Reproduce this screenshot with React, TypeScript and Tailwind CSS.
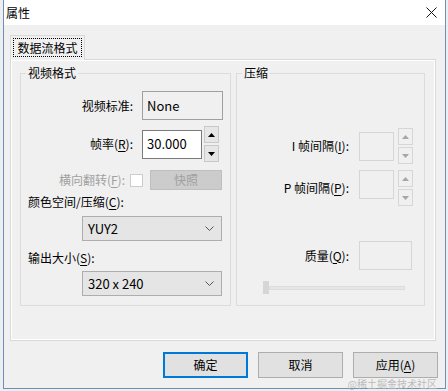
import type { ReactNode } from 'react';

const font = { fontFamily: '"Noto Sans CJK SC", "Noto Sans", sans-serif' };

const Key = ({ k }: { k: string }) => <span className="underline underline-offset-2">{k}</span>;

const Arrow = ({ up, disabled }: { up?: boolean; disabled?: boolean }) => (
  <svg width="7" height="4" viewBox="0 0 7 4">
    <path d={up ? 'M0 4 L3.5 0 L7 4 Z' : 'M0 0 L7 0 L3.5 4 Z'} fill={disabled ? '#a6a6a6' : '#000'} />
  </svg>
);

const Spinner = ({ disabled }: { disabled?: boolean }) => (
  <div className="flex w-[15px] flex-col gap-[2px]">
    {[true, false].map((up) => (
      <div
        key={String(up)}
        className={
          'flex h-[17px] items-center justify-center border ' +
          (disabled ? 'border-[#d6d6d6] bg-[#f0f0f0]' : 'border-[#c9c9c9] bg-[#e6e6e6]')
        }
      >
        <Arrow up={up} disabled={disabled} />
      </div>
    ))}
  </div>
);

const Select = ({ value }: { value: string }) => (
  <div className="ml-[61px] flex h-[25px] w-[140px] items-center justify-between border border-[#adadad] bg-[#e5e5e5] pr-[7px] pl-[5px] text-[13px]">
    <span>{value}</span>
    <svg width="9" height="5" viewBox="0 0 9 5">
      <path d="M0.5 0.5 L4.5 4.5 L8.5 0.5" fill="none" stroke="#555" strokeWidth="1" />
    </svg>
  </div>
);

const Group = ({
  title,
  className,
  children,
}: {
  title: string;
  className: string;
  children: ReactNode;
}) => (
  <fieldset className={'border border-[#dcdcdc] ' + className}>
    <legend className="ml-[5px] px-[2px] leading-[16px]">{title}</legend>
    {children}
  </fieldset>
);

const Button = ({ children, focused }: { children: ReactNode; focused?: boolean }) => (
  <div
    className={
      'flex h-[26px] w-[85px] items-center justify-center bg-[#e1e1e1] ' +
      (focused ? 'border-2 border-[#0078d7]' : 'border border-[#adadad]')
    }
  >
    {children}
  </div>
);

export default function App() {
  return (
    <div
      className="relative h-[391px] w-[448px] overflow-hidden bg-[#eceef1] text-[12px] leading-[16px] text-black"
      style={font}
    >
      <div className="ml-[3px] flex h-[389px] w-[443px] flex-col border-x border-b border-[#6f8fb6] bg-[#f0f0f0]">
        {/* title bar */}
        <div className="flex h-[25px] items-center justify-between bg-white pr-[8px] pl-[2px]">
          <span className="text-[12px]">属性</span>
          <svg width="11" height="11" viewBox="0 0 11 11">
            <path d="M0.5 0.5 L10.5 10.5 M10.5 0.5 L0.5 10.5" stroke="#111" strokeWidth="1" />
          </svg>
        </div>

        {/* tab */}
        <div className="mt-[10px] ml-[6px] flex">
          <div className="relative z-10 -mb-px h-[25px] w-[75px] border-x border-t border-[#d9d9d9] bg-[#f0f0f0] p-[2px]">
            <div className="flex h-[19px] items-center justify-center border border-dotted border-black">
              数据流格式
            </div>
          </div>
        </div>

        {/* panel */}
        <div className="ml-[6px] flex h-[282px] w-[426px] border border-[#d9d9d9] shadow-[inset_1px_1px_0_#fff,inset_-1px_-1px_0_#fff]">
          <Group title="视频格式" className="mt-[5px] ml-[9px] h-[241px] w-[211px]">
            <div className="mt-[10px] flex items-center">
              <span className="w-[121px] pr-[9px] text-right">视频标准:</span>
              <div className="flex h-[29px] w-[81px] items-center border border-[#a0a0a0] pt-px pl-[4px] text-[13px]">
                None
              </div>
            </div>
            <div className="mt-[6px] flex h-[36px] items-center">
              <span className="w-[121px] pr-[9px] text-right">
                帧率(<Key k="R" />):
              </span>
              <div className="flex h-[29px] w-[60px] items-center border border-[#7a7a7a] bg-white pl-[4px] text-[13px]">
                30.000
              </div>
              <div className="ml-[2px]">
                <Spinner />
              </div>
            </div>
            <div className="mt-[8px] flex h-[20px] items-center text-[#a0a0a0]">
              <span className="w-[104px] text-right">
                横向翻转(<Key k="F" />):
              </span>
              <div className="ml-[5px] h-[13px] w-[13px] border border-[#cccccc] bg-white" />
              <div className="ml-[7px] flex h-[20px] w-[72px] items-center justify-center border border-[#bfbfbf] bg-[#cccccc] text-[#a0a0a0]">
                快照
              </div>
            </div>
            <div className="mt-[4px] ml-[7px]">
              颜色空间/压缩(<Key k="C" />):
            </div>
            <div className="mt-[6px]">
              <Select value="YUY2" />
            </div>
            <div className="mt-[9px] ml-[7px]">
              输出大小(<Key k="S" />):
            </div>
            <div className="mt-[5px]">
              <Select value="320 x 240" />
            </div>
          </Group>

          <Group title="压缩" className="mt-[5px] ml-[5px] h-[241px] w-[189px]">
            <div className="mt-[47px] flex h-[36px] items-center">
              <span className="w-[122px] pr-[10px] text-right">
                I 帧间隔(<Key k="I" />):
              </span>
              <div className="h-[29px] w-[35px] border border-[#d6d6d6]" />
              <div className="ml-[4px]">
                <Spinner disabled />
              </div>
            </div>
            <div className="mt-[6px] flex h-[36px] items-center">
              <span className="w-[122px] pr-[10px] text-right">
                P 帧间隔(<Key k="P" />):
              </span>
              <div className="h-[29px] w-[35px] self-start border border-[#d6d6d6]" />
              <div className="ml-[4px]">
                <Spinner disabled />
              </div>
            </div>
            <div className="mt-[35px] flex items-center">
              <span className="w-[122px] pr-[10px] text-right">
                质量(<Key k="Q" />):
              </span>
              <div className="h-[29px] w-[53px] border border-[#d6d6d6]" />
            </div>
            <div className="mt-[11px] ml-[26px] flex h-[13px] w-[142px] items-center">
              <div className="h-[13px] w-[6px] bg-[#d6d6d6]" />
              <div className="h-[4px] flex-1 border border-[#dcdcdc] bg-[#e6e6e6]" />
            </div>
          </Group>
        </div>

        {/* buttons */}
        <div className="mt-[11px] mr-[7px] flex justify-end gap-[10px]">
          <Button focused>确定</Button>
          <Button>取消</Button>
          <Button>
            <span>
              应用(<Key k="A" />)
            </span>
          </Button>
        </div>
      </div>

      <div className="absolute right-[11px] bottom-[1px] text-[10px] leading-[12px] text-[#b4b4b4]/90">
        @稀土掘金技术社区
      </div>
    </div>
  );
}
